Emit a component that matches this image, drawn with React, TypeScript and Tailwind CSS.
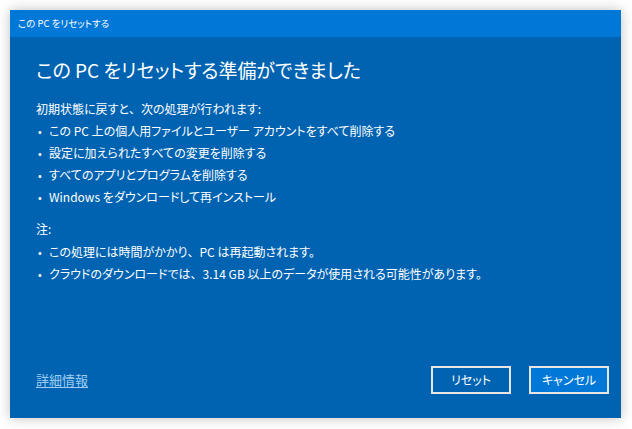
const items = [
  "この PC 上の個人用ファイルとユーザー アカウントをすべて削除する",
  "設定に加えられたすべての変更を削除する",
  "すべてのアプリとプログラムを削除する",
  "Windows をダウンロードして再インストール",
];

const notes = [
  "この処理には時間がかかり、PC は再起動されます。",
  "クラウドのダウンロードでは、3.14 GB 以上のデータが使用される可能性があります。",
];

// the reference keeps the ideographic comma full width
const withComma = (text: string) =>
  text.split("、").flatMap((part, i) =>
    i === 0
      ? [part]
      : [
          <span key={i} className="[font-feature-settings:normal]">
            、
          </span>,
          part,
        ]
  );

const Bullet = ({ text }: { text: string }) => (
  <li className="flex h-[22px] items-center">
    <span className="w-[13px] pl-[2px] text-[11px]">•</span>
    <span>{withComma(text)}</span>
  </li>
);

export default function App() {
  return (
    <div
      className="h-[429px] w-[632px] bg-white pl-[10px] pt-[10px] text-white [font-feature-settings:'palt']"
      style={{ fontFamily: '"Noto Sans CJK JP", "Noto Sans", sans-serif' }}
    >
      <div className="flex h-[408px] w-[611px] flex-col bg-[#0063b1] shadow-[0_0_12px_rgba(0,0,0,0.25)]">
        <div className="flex h-[27px] items-center bg-[#0078d7] pl-[8px] text-[9.5px]">
          この PC をリセットする
        </div>

        <div className="flex flex-1 flex-col px-[26px]">
          <h1 className="mt-[18px] text-[19px] leading-[30px] font-normal">
            この PC をリセットする準備ができました
          </h1>

          <div className="mt-[13px] text-[12px]">
            <p className="flex h-[22px] items-center">
              {withComma("初期状態に戻すと、次の処理が行われます:")}
            </p>
            <ul>
              {items.map((t) => (
                <Bullet key={t} text={t} />
              ))}
            </ul>

            <p className="mt-[10px] flex h-[22px] items-center">注:</p>
            <ul className="mt-[1px]">
              {notes.map((t) => (
                <Bullet key={t} text={t} />
              ))}
            </ul>
          </div>

          <div className="mt-auto mb-[24px] flex items-center justify-between">
            <a href="#" className="text-[13px] text-[#9fcdf2] underline underline-offset-2">
              詳細情報
            </a>
            <div className="-mr-[14px] flex gap-[18px]">
              <button className="h-[28px] w-[80px] border-2 border-[#e6e6e6] bg-[#0063b1] text-[12px]">
                リセット
              </button>
              <button className="h-[28px] w-[80px] border-2 border-[#e6e6e6] bg-[#0078d7] text-[12px]">
                キャンセル
              </button>
            </div>
          </div>
        </div>
      </div>
    </div>
  );
}
